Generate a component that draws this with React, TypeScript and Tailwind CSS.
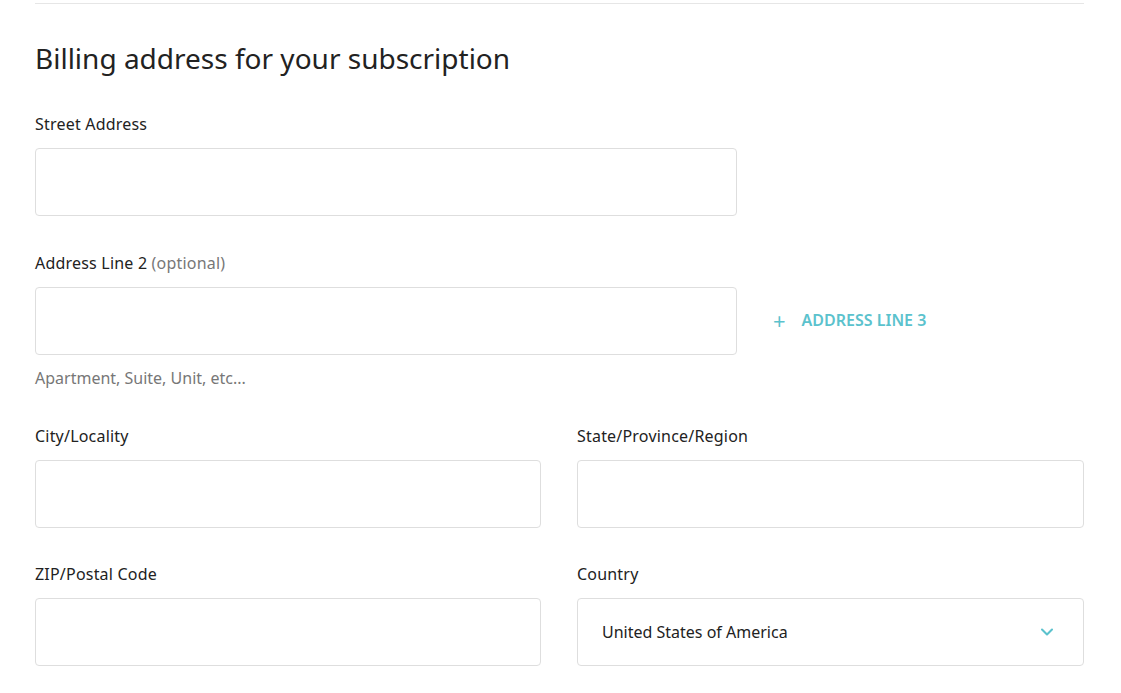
import { ChevronDown } from 'lucide-react';

const font = { fontFamily: '"Noto Sans", Lato, sans-serif' };

function Field({ label, optional, className = '' }: { label: string; optional?: boolean; className?: string }) {
  return (
    <div className={className}>
      <label className="block text-[16px] leading-5 tracking-[0.2px] text-[#222]">
        {label}
        {optional && <span className="text-[#777]"> (optional)</span>}
      </label>
      <input className="mt-[14px] block h-[68px] w-full rounded-[4px] border border-[#dedede] bg-white px-6 outline-none" />
    </div>
  );
}

export default function App() {
  return (
    <div className="min-h-screen bg-white" style={font}>
      <div className="pl-[35px] pr-[37px]">
        <div className="mt-[3px] border-t border-[#e6e6e6]" />
        <h2 className="mt-[34px] text-[28px] leading-10 text-[#222]">Billing address for your subscription</h2>

        <Field label="Street Address" className="mt-[36px] w-[702px]" />

        <div className="mt-[37px] flex items-end">
          <Field label="Address Line 2" optional className="w-[702px]" />
          <button className="mb-[23px] ml-[36px] flex items-center gap-[16px] text-[16px] font-semibold text-[#5bc2cd]">
            <span className="text-[22px] font-normal leading-none">+</span>
            ADDRESS LINE 3
          </button>
        </div>
        <p className="mt-[13px] text-[16px] leading-5 text-[#777]">Apartment, Suite, Unit, etc...</p>

        <div className="mt-[38px] grid grid-cols-[506px_507px] gap-x-[36px]">
          <Field label="City/Locality" />
          <Field label="State/Province/Region" />
        </div>

        <div className="mt-[36px] grid grid-cols-[506px_507px] gap-x-[36px]">
          <Field label="ZIP/Postal Code" />
          <div>
            <label className="block text-[16px] leading-5 tracking-[0.2px] text-[#222]">Country</label>
            <div className="mt-[14px] flex h-[68px] items-center justify-between rounded-[4px] border border-[#dedede] bg-white pl-6 pr-[26px]">
              <span className="text-[16px] text-[#222]">United States of America</span>
              <ChevronDown className="h-5 w-5 text-[#5bc2cd]" strokeWidth={2.5} />
            </div>
          </div>
        </div>
      </div>
    </div>
  );
}
